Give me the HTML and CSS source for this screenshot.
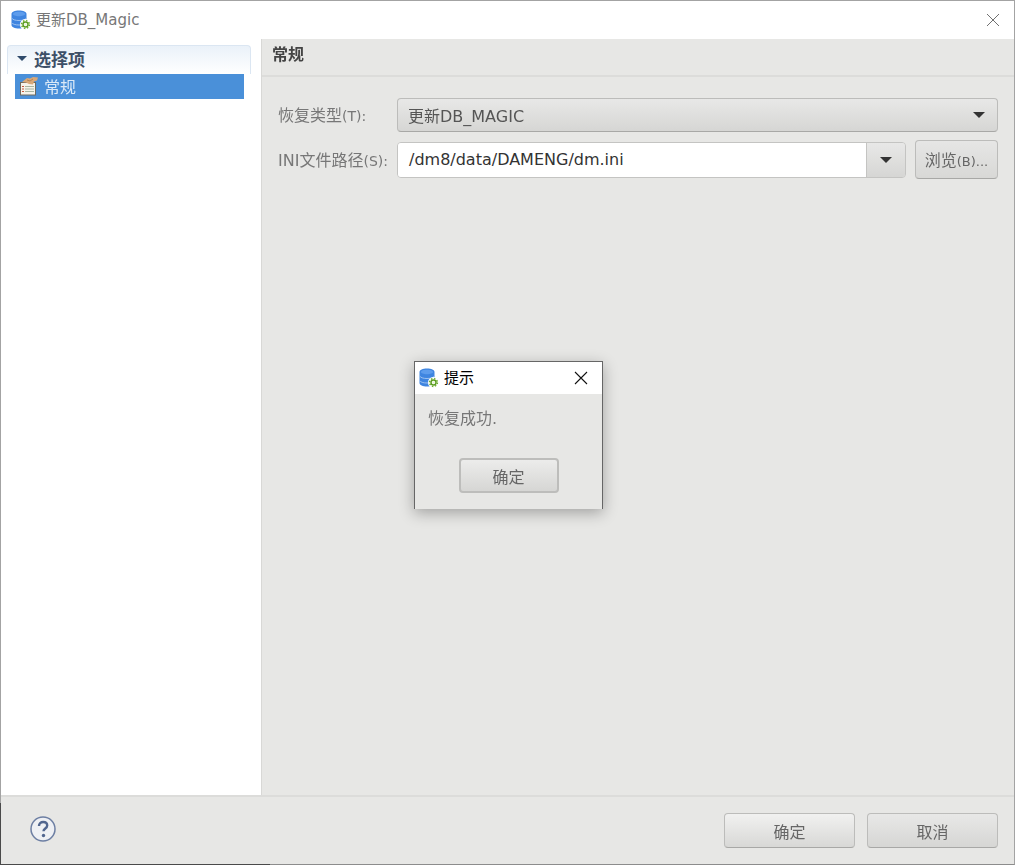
FILE: index.html
```html
<!DOCTYPE html>
<html lang="zh-CN">
<head>
    <meta charset="UTF-8">
    <meta name="viewport" content="width=device-width, initial-scale=1.0">
    <title>更新DB_Magic</title>
    <link rel="stylesheet" href="styles.css">
</head>
<body>
    <svg class="defs" width="0" height="0">
        <defs>
            <symbol id="dbIcon" viewBox="0 0 20 20">
                <path d="M0.500 4c0-2 3.200-3.500 7.500-3.500s7.500 1.500 7.500 3.500v11c0 2-3.200 3.500-7.500 3.500s-7.500-1.500-7.500-3.500z" fill="#3f85e0"/>
                <path d="M.5 8c1 1.600 3.700 2.500 7.500 2.500s6.500-.9 7.500-2.500M.5 12.500c1 1.600 3.700 2.500 7.500 2.500s6.500-.9 7.500-2.500" fill="none" stroke="#9cc1f0" stroke-width="1"/>
                <path d="M2 4c0-1.300 2.700-2.200 6-2.200s6 .9 6 2.200-2.700 2.200-6 2.200-6-.9-6-2.200z" fill="#5d9cec"/>
                <circle cx="14.500" cy="14.500" r="5.500" fill="#fff"/>
                <circle cx="14.500" cy="14.500" r="3.900" fill="none" stroke="#6cae2e" stroke-width="1.500" stroke-dasharray="1.500 1.560"/>
                <circle cx="14.500" cy="14.500" r="2.500" fill="none" stroke="#5f9f25" stroke-width="1.500"/>
                <circle cx="14.500" cy="14.500" r="1" fill="#e4efcc"/>
            </symbol>
        </defs>
    </svg>

    <div class="window">
        <header class="titlebar">
            <svg class="app-icon"><use href="#dbIcon"/></svg>
            <span class="window-title">更新DB_Magic</span>
            <svg class="close-btn" viewBox="0 0 14 14"><path d="M1 1l12 12M13 1L1 13" stroke="#707070" stroke-width="1" fill="none"/></svg>
        </header>

        <div class="main">
            <aside class="sidebar">
                <div class="section-head">
                    <span class="arrow arrow-navy"></span>
                    <span class="section-title">选择项</span>
                </div>
                <div class="nav-item">
                    <svg class="nav-icon" viewBox="0 0 20 20">
                        <rect x="1.500" y="6.500" width="15" height="12.500" fill="#f6f3ea" stroke="#6f6a5e"/>
                        <path d="M3 10h2v1H3zM3 12.500h2v1H3zM3 15h2v1H3z" fill="#c9583c"/>
                        <path d="M6 10h9v1H6zM6 12.500h9v1H6zM6 15h9v1H6z" fill="#a9b6a0"/>
                        <path d="M3 6l5-4 3 .5 3-1.500 5 .5-1 3-3 1-1 3-4-.5-3-1.500z" fill="#d9a878"/>
                        <path d="M8 4l3 1 3-2" fill="none" stroke="#a87a4e" stroke-width=".8"/>
                    </svg>
                    <span>常规</span>
                </div>
            </aside>

            <section class="content">
                <h2 class="content-title">常规</h2>
                <div class="form">
                    <label class="field-label">恢复类型<span class="mnemonic">(T):</span></label>
                    <div class="select">
                        <span>更新DB_MAGIC</span>
                        <span class="arrow"></span>
                    </div>
                    <label class="field-label">INI文件路径<span class="mnemonic">(S):</span></label>
                    <div class="path-row">
                        <div class="combo">
                            <div class="combo-input">/dm8/data/DAMENG/dm.ini</div>
                            <div class="combo-btn"><span class="arrow"></span></div>
                        </div>
                        <button class="btn btn-browse">浏览<span class="btn-mnemonic">(B)...</span></button>
                    </div>
                </div>
            </section>
        </div>

        <footer class="footer">
            <svg class="help-icon" viewBox="0 0 26 26">
                <circle cx="13" cy="13" r="12" fill="#eef0f4" stroke="#6d7fa3" stroke-width="1.500"/>
                <path d="M9 10c0-2.500 1.800-4 4.200-4s4 1.400 4 3.500c0 3-3.700 3-3.700 5.800" fill="none" stroke="#51668f" stroke-width="2.400"/>
                <circle cx="13.500" cy="19.500" r="1.700" fill="#51668f"/>
            </svg>
            <div class="footer-btns">
                <button class="btn btn-ok">确定</button>
                <button class="btn btn-cancel">取消</button>
            </div>
        </footer>
    </div>

    <div class="dialog">
        <div class="dialog-bar">
            <svg class="app-icon"><use href="#dbIcon"/></svg>
            <span class="dialog-title">提示</span>
            <svg class="dialog-close" viewBox="0 0 14 14"><path d="M1 1l12 12M13 1L1 13" stroke="#111" stroke-width="1.100" fill="none"/></svg>
        </div>
        <div class="dialog-body">
            <p class="dialog-msg">恢复成功.</p>
            <button class="btn btn-dialog">确定</button>
        </div>
    </div>
</body>
</html>
```

FILE: styles.css
```css
* {
    margin: 0;
    padding: 0;
    box-sizing: border-box;
}

body {
    width: 1015px;
    height: 865px;
    overflow: hidden;
    position: relative;
    background: #e7e7e5;
    font-family: "DejaVu Sans", "Noto Sans CJK SC", sans-serif;
    color: #555;
}

/* darker desktop showing behind the lower left window edge */
body::before {
    content: "";
    position: absolute;
    z-index: 1;
    left: 0;
    top: 803px;
    width: 1px;
    height: 62px;
    background: #4a4a4a;
}

body::after {
    content: "";
    position: absolute;
    z-index: 1;
    left: 0;
    bottom: 0;
    width: 270px;
    height: 1px;
    background: #4a4a4a;
}

.defs {
    position: absolute;
}

.window {
    height: 865px;
    display: flex;
    flex-direction: column;
    border: 1px solid #a3a3a3;
    border-bottom-color: #8c8c8c;
    filter: blur(0.35px);
}

.titlebar {
    height: 38px;
    flex: none;
    display: flex;
    align-items: center;
    background: #fff;
    padding: 0 14px 0 10px;
}

.app-icon {
    width: 20px;
    height: 20px;
    flex: none;
}

.window-title {
    margin-left: 5px;
    font-size: 15px;
    line-height: 18px;
    color: #777;
}

.close-btn {
    width: 14px;
    height: 14px;
    margin-left: auto;
}

.main {
    flex: 1;
    display: flex;
    min-height: 0;
}

.sidebar {
    width: 261px;
    flex: none;
    background: #fff;
    border-right: 1px solid #d8d8d6;
    padding: 6px 10px 0 6px;
}

.section-head {
    height: 29px;
    display: flex;
    align-items: center;
    padding-left: 9px;
    padding-bottom: 3px;
    border: 1px solid #dbe6f2;
    border-bottom: 0;
    border-radius: 4px 4px 0 0;
    background: linear-gradient(#eaf1f9, #fff);
}

.section-title {
    margin-left: 7px;
    font-size: 17px;
    font-weight: 700;
    color: #3d5068;
}

.arrow {
    display: inline-block;
    width: 0;
    height: 0;
    border-left: 6px solid transparent;
    border-right: 6px solid transparent;
    border-top: 6px solid #333;
}

.arrow-navy {
    border-left-width: 5px;
    border-right-width: 5px;
    border-top: 5px solid #2f4a6b;
}

.nav-item {
    height: 25px;
    margin: 0 7px 0 8px;
    display: flex;
    align-items: center;
    padding: 0 0 1px 4px;
    background: #4a90d9;
    color: #dbe9f7;
    font-size: 16px;
}

.nav-icon {
    width: 20px;
    height: 20px;
    margin-right: 5px;
}

.content {
    flex: 1;
    min-width: 0;
}

.content-title {
    height: 38px;
    border-bottom: 2px solid #dcdcda;
    padding-left: 10px;
    font-size: 16px;
    line-height: 32px;
    font-weight: 700;
    color: #444;
}

.form {
    display: grid;
    grid-template-columns: 119px 1fr;
    row-gap: 8px;
    align-items: center;
    padding: 21px 16px 0 16px;
}

.field-label {
    padding-bottom: 2px;
    font-size: 16px;
    color: #777;
    white-space: nowrap;
}

.mnemonic {
    font-size: 14px;
}

.btn-mnemonic {
    font-size: 13px;
}

.select {
    height: 34px;
    display: flex;
    align-items: center;
    justify-content: space-between;
    padding: 0 12px 1px 10px;
    border: 1px solid #bcbcba;
    border-bottom-color: #a8a8a6;
    border-radius: 4px;
    background: linear-gradient(#e8e8e7, #d6d6d4);
    font-size: 16px;
    color: #555;
}

.path-row {
    height: 39px;
    display: flex;
    gap: 9px;
}

.combo {
    flex: 1;
    height: 36px;
    margin-top: 2px;
    display: flex;
    border: 1px solid #c4c4c2;
    border-radius: 4px;
    overflow: hidden;
}

.combo-input {
    flex: 1;
    background: #fff;
    padding-left: 11px;
    font-size: 16px;
    line-height: 33px;
    color: #333;
}

.combo-btn {
    width: 39px;
    display: flex;
    align-items: center;
    justify-content: center;
    border-left: 1px solid #c4c4c2;
    background: linear-gradient(#e8e8e7, #d6d6d4);
}

.btn {
    border: 1px solid #bcbcba;
    border-bottom-color: #a8a8a6;
    border-radius: 4px;
    background: linear-gradient(#f1f1f0, #d8d8d6);
    font-family: inherit;
    font-size: 16px;
    color: #666;
}

.btn-browse {
    width: 83px;
    height: 39px;
    padding-bottom: 2px;
    background: linear-gradient(#e6e6e5, #d8d8d6);
    white-space: nowrap;
}

.footer {
    height: 69px;
    flex: none;
    display: flex;
    align-items: center;
    justify-content: space-between;
    border-top: 2px solid #dcdcda;
    padding: 0 16px 0 29px;
}

.help-icon {
    width: 26px;
    height: 26px;
    margin-bottom: 4px;
}

.footer-btns {
    display: flex;
    gap: 12px;
}

.btn-ok,
.btn-cancel {
    width: 131px;
    height: 35px;
}

.btn-cancel {
    background: linear-gradient(#e8e8e7, #d6d6d4);
}

.dialog {
    position: absolute;
    z-index: 2;
    left: 414px;
    top: 361px;
    width: 189px;
    height: 148px;
    border: 1px solid #666;
    border-bottom: 0;
    background: #e7e7e5;
    box-shadow: 0 4px 14px rgba(0, 0, 0, 0.3);
}

.dialog-bar {
    height: 32px;
    display: flex;
    align-items: center;
    background: #fff;
    padding: 0 14px 0 4px;
}

.dialog-title {
    margin-left: 5px;
    font-size: 15px;
    line-height: 18px;
    color: #000;
}

.dialog-close {
    width: 14px;
    height: 14px;
    margin-left: auto;
}

.dialog-body {
    display: flex;
    flex-direction: column;
    align-items: center;
    filter: blur(0.35px);
}

.dialog-msg {
    align-self: flex-start;
    margin: 15px 0 0 13px;
    font-size: 16px;
    line-height: 20px;
    color: #777;
}

.btn-dialog {
    width: 100px;
    height: 35px;
    margin-top: 29px;
    border: 2px solid #bdbdbb;
    background: linear-gradient(#ececeb, #d6d6d4);
}
```
